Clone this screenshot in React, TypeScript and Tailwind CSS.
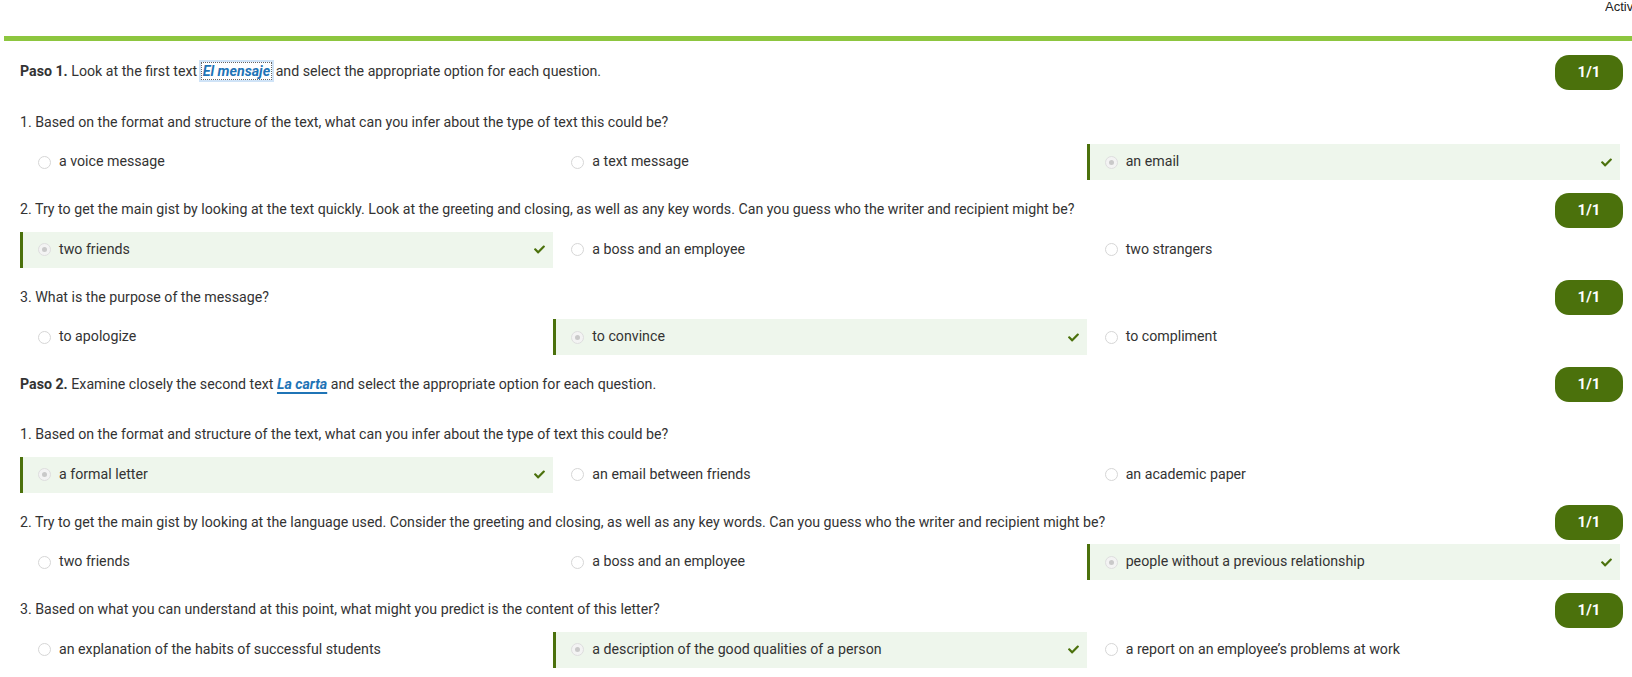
import { FaCheck } from 'react-icons/fa';

type Question = {
  text: string;
  options: string[];
  answer: number;
  badge?: boolean;
};

type Step = {
  label: string;
  before: string;
  link: string;
  after: string;
  focused?: boolean;
  questions: Question[];
};

const steps: Step[] = [
  {
    label: 'Paso 1.',
    before: 'Look at the first text',
    link: 'El mensaje',
    after: 'and select the appropriate option for each question.',
    focused: true,
    questions: [
      {
        text: '1. Based on the format and structure of the text, what can you infer about the type of text this could be?',
        options: ['a voice message', 'a text message', 'an email'],
        answer: 2,
      },
      {
        text: '2. Try to get the main gist by looking at the text quickly. Look at the greeting and closing, as well as any key words. Can you guess who the writer and recipient might be?',
        options: ['two friends', 'a boss and an employee', 'two strangers'],
        answer: 0,
        badge: true,
      },
      {
        text: '3. What is the purpose of the message?',
        options: ['to apologize', 'to convince', 'to compliment'],
        answer: 1,
        badge: true,
      },
    ],
  },
  {
    label: 'Paso 2.',
    before: 'Examine closely the second text',
    link: 'La carta',
    after: 'and select the appropriate option for each question.',
    questions: [
      {
        text: '1. Based on the format and structure of the text, what can you infer about the type of text this could be?',
        options: ['a formal letter', 'an email between friends', 'an academic paper'],
        answer: 0,
      },
      {
        text: '2. Try to get the main gist by looking at the language used. Consider the greeting and closing, as well as any key words. Can you guess who the writer and recipient might be?',
        options: ['two friends', 'a boss and an employee', 'people without a previous relationship'],
        answer: 2,
        badge: true,
      },
      {
        text: '3. Based on what you can understand at this point, what might you predict is the content of this letter?',
        options: [
          'an explanation of the habits of successful students',
          'a description of the good qualities of a person',
          "a report on an employee\u2019s problems at work",
        ],
        answer: 1,
        badge: true,
      },
    ],
  },
];

function Badge() {
  return (
    <div className="w-[68px] h-[35px] rounded-[14px] bg-[#4b710c] text-white text-[15px] font-bold flex items-center justify-center shrink-0">
      1/1
    </div>
  );
}

function Option({ label, selected }: { label: string; selected: boolean }) {
  return (
    <div
      className={
        selected
          ? 'h-9 flex items-center border-l-[3px] border-[#4b710c] bg-[#eef6ec] pl-[15px] pr-[8px]'
          : 'h-9 flex items-center border-l-[3px] border-transparent pl-[15px] pr-[8px]'
      }
    >
      {selected ? (
        <span className="w-[13px] h-[13px] rounded-full border border-[#dedede] bg-[#f3f3f3] flex items-center justify-center shrink-0">
          <span className="w-[5px] h-[5px] rounded-full bg-[#c9c9c9]" />
        </span>
      ) : (
        <span className="w-[13px] h-[13px] rounded-full border border-[#d6d6d6] bg-white shrink-0" />
      )}
      <span className="ml-2 text-[14.2px] text-[#333]">{label}</span>
      {selected && <FaCheck className="ml-auto text-[#4b710c]" size={11} />}
    </div>
  );
}

export default function App() {
  return (
    <div className="w-full h-[677px] overflow-hidden bg-white" style={{ fontFamily: 'Roboto, "Noto Sans", sans-serif' }}>
      {/* top bar, tab label is clipped by the window edge */}
      <div className="h-9 flex">
        <div
          className="ml-auto w-[27px] overflow-hidden whitespace-nowrap text-[13px] leading-[14px] text-[#222]"
          style={{ fontFamily: '"Liberation Sans", Arial, sans-serif' }}
        >
          Actividad
        </div>
      </div>
      <div className="ml-1 h-[5px] bg-[#8dc63f]" />

      <div className="pl-5 pr-[9px] pt-[14px]">
        {steps.map((step, si) => (
          <div key={si} className={si > 0 ? 'mt-[12.5px]' : ''}>
            <div className="h-[34px] flex items-center justify-between text-[14.2px] text-[#333]">
              <p>
                <span className="font-bold">{step.label}</span> {step.before}{' '}
                {step.focused ? (
                  <span className="font-bold italic text-[#1f74b6] border border-dotted border-[#666] ring-2 ring-[#cfe3f7] px-px">
                    {step.link}
                  </span>
                ) : (
                  <span className="font-bold italic text-[#1f74b6] underline decoration-[1.5px] underline-offset-[3px]">
                    {step.link}
                  </span>
                )}{' '}
                {step.after}
              </p>
              <Badge />
            </div>

            {step.questions.map((q, qi) => (
              <div key={qi} className={qi === 0 ? 'mt-4' : 'mt-[12.5px]'}>
                <div className="h-[35px] flex items-center justify-between text-[14.2px] text-[#333]">
                  <p>{q.text}</p>
                  {q.badge && <Badge />}
                </div>
                <div className="mt-1 mr-[3px] grid grid-cols-3">
                  {q.options.map((o, oi) => (
                    <Option key={oi} label={o} selected={oi === q.answer} />
                  ))}
                </div>
              </div>
            ))}
          </div>
        ))}
      </div>
    </div>
  );
}
